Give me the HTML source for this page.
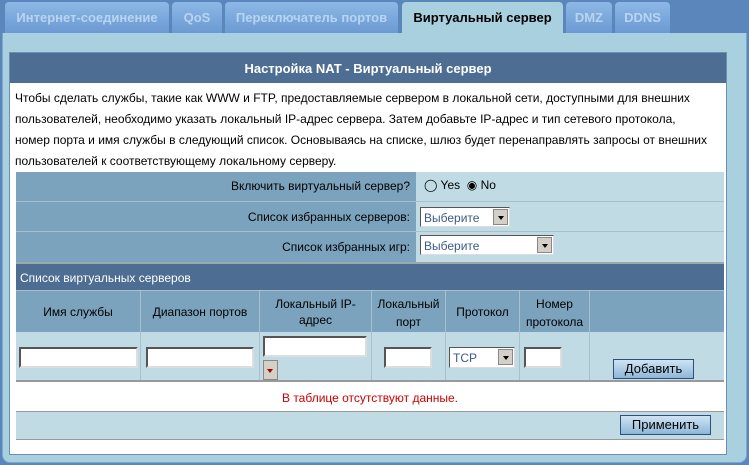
<!DOCTYPE html><html><head><meta charset="utf-8"><style>
*{box-sizing:border-box}body{margin:0;width:749px;height:465px;overflow:hidden;background:#5a86bb;font-family:"Liberation Sans",sans-serif;font-size:12px;position:relative}
.tab{position:absolute;top:2px;height:31px;background:linear-gradient(#8db8e6,#6b9ad2);color:#b9d4f0;font-weight:bold;font-size:13px;border-radius:4px 4px 0 0;text-align:center;line-height:30px;padding-top:1px}
.act{background:#a9d0df;color:#000;font-weight:bold;height:32px}
.panel{position:absolute;left:2px;top:33px;width:745px;height:430px;background:#a9d0df;border:1px solid #7fa8c8;border-top:none;border-radius:0 0 8px 8px}
.box{position:absolute;left:9px;top:52px;width:718px;height:403px;background:#fff;border:1px solid #6d8fb0}
.hdr{position:absolute;left:0;top:0;width:716px;height:30px;background:#4d6d93;color:#fff;font-weight:bold;font-size:13px;text-align:center;line-height:32px}
.p{position:absolute;left:5px;top:35px;width:698px;line-height:21px;font-size:12px;color:#000}
.r{position:absolute;left:6px;width:708px}
.lab{position:absolute;left:0;width:400px;height:100%;background:#7ba3bd;text-align:right;padding-right:6px;color:#000}
.val{position:absolute;left:400px;right:0;height:100%;background:#c0dbe3}
.sel{position:absolute;height:20px;background:#fff;border:1px solid #555;border-right-color:#ddd;border-bottom-color:#ddd;color:#3d5a8a;padding:3px 3px;font-size:12px}
.sel b{position:absolute;right:1px;top:1px;width:15px;height:16px;background:#d4d0c8;border:1px solid #888}
.sel b:after{content:"";position:absolute;left:4px;top:6px;border:3px solid transparent;border-top:4px solid #000}
.c{position:absolute;top:0;height:100%;border-right:1px solid #a8bfcc;text-align:center}
.in{position:absolute;background:#fff;border:2px solid #555;border-right-color:#ddd;border-bottom-color:#ddd;height:21px}
.btn{position:absolute;background:linear-gradient(#cfe4f3,#8fb6d8);border:1px solid #2c4f7c;font-size:13px;text-align:center;line-height:17px;height:20px}
</style></head><body>
<div class="panel"></div>
<div class="tab" style="left:5px;width:164px">Интернет-соединение</div>
<div class="tab" style="left:172px;width:50px">QoS</div>
<div class="tab" style="left:225px;width:173px">Переключатель портов</div>
<div class="tab act" style="left:402px;width:161px">Виртуальный сервер</div>
<div class="tab" style="left:566px;width:46px">DMZ</div>
<div class="tab" style="left:615px;width:55px">DDNS</div>
<div class="box">
<div class="hdr">Настройка NAT - Виртуальный сервер</div>
<div class="p">Чтобы сделать службы, такие как WWW и FTP, предоставляемые сервером в локальной сети, доступными для внешних пользователей, необходимо указать локальный IP-адрес сервера. Затем добавьте IP-адрес и тип сетевого протокола, номер порта и имя службы в следующий список. Основываясь на списке, шлюз будет перенаправлять запросы от внешних пользователей к соответствующему локальному серверу.</div>
<div class="r" style="top:119px;height:30px;border-bottom:1px solid #a8bfcc"><div class="lab" style="line-height:28px">Включить виртуальный сервер?</div><div class="val" style="line-height:26px;padding-left:8px">◯ Yes &nbsp;◉ No</div></div>
<div class="r" style="top:149px;height:30px;border-bottom:1px solid #a8bfcc"><div class="lab" style="line-height:30px">Список избранных серверов:</div><div class="val"><div class="sel" style="left:4px;top:5px;width:90px">Выберите<b></b></div></div></div>
<div class="r" style="top:179px;height:30px"><div class="lab" style="line-height:30px">Список избранных игр:</div><div class="val"><div class="sel" style="left:4px;top:3px;width:134px">Выберите<b></b></div></div></div>
<div class="r" style="top:209px;height:28px;background:#4d6d93;color:#fff;line-height:28px;padding-left:4px;border-top:2px solid #9aa">Список виртуальных серверов</div>
<div class="r" style="top:237px;height:42px;background:#7ba3bd;border-top:1px solid #a8bfcc">
<div class="c" style="left:0;width:125px;line-height:42px">Имя службы</div>
<div class="c" style="left:125px;width:119px;line-height:42px">Диапазон портов</div>
<div class="c" style="left:244px;width:112px;padding-top:5px;line-height:16px">Локальный IP-<br>адрес</div>
<div class="c" style="left:356px;width:74px;padding-top:4px;line-height:18px">Локальный<br>порт</div>
<div class="c" style="left:430px;width:74px;line-height:42px">Протокол</div>
<div class="c" style="left:504px;width:70px;padding-top:4px;line-height:18px">Номер<br>протокола</div>
</div>
<div class="r" style="top:279px;height:50px;background:#c0dbe3;border-bottom:2px solid #999">
<div class="c" style="left:0;width:125px"></div><div class="c" style="left:125px;width:119px"></div><div class="c" style="left:244px;width:112px"></div><div class="c" style="left:356px;width:74px"></div><div class="c" style="left:430px;width:74px"></div><div class="c" style="left:504px;width:70px"></div>
<div class="in" style="left:3px;top:15px;width:119px"></div>
<div class="in" style="left:130px;top:15px;width:108px"></div>
<div class="in" style="left:247px;top:4px;width:104px"></div>
<div style="position:absolute;left:247px;top:28px;width:15px;height:20px;background:#d4d0c8;border:1px solid #888"><div style="position:absolute;left:3px;top:8px;border:3px solid transparent;border-top:4px solid #a00"></div></div>
<div class="in" style="left:368px;top:15px;width:48px"></div>
<div class="sel" style="left:433px;top:15px;width:66px;height:21px">TCP<b></b></div>
<div class="in" style="left:508px;top:15px;width:38px"></div>
<div class="btn" style="left:597px;top:27px;width:81px">Добавить</div>
</div>
<div class="r" style="top:329px;height:30px;color:#c00;text-align:center;line-height:32px;border-bottom:1px solid #999">В таблице отсутствуют данные.</div>
<div class="r" style="top:359px;height:28px;background:#c0dbe3;border-bottom:1px solid #999"><div class="btn" style="left:604px;top:3px;width:91px">Применить</div></div>
</div>
</body></html>
